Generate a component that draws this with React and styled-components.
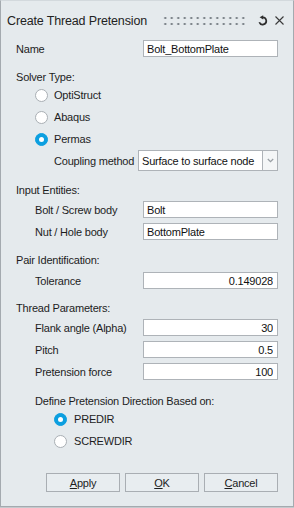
import React from 'react'
import styled, { createGlobalStyle } from 'styled-components'

const GlobalStyle = createGlobalStyle`
  html, body {
    margin: 0;
    padding: 0;
    background: #c4c9cd;
  }
  * {
    box-sizing: border-box;
  }
`

const Window = styled.div`
  width: 294px;
  height: 507px;
  background: #e5eaed;
  border: 1px solid #a4aaaf;
  border-top-color: #d3d9dd;
  display: flex;
  flex-direction: column;
  font-family: "Segoe UI", "Liberation Sans", Arial, sans-serif;
  font-size: 11px;
  letter-spacing: -0.2px;
  color: #1d1d1d;
`

const TitleBar = styled.div`
  height: 39px;
  display: flex;
  align-items: center;
  padding: 0 9px 0 6px;
`

const Title = styled.div`
  font-size: 12.5px;
  letter-spacing: -0.15px;
  color: #222;
  flex: 1;
`

const Grip = styled.div`
  width: 86px;
  height: 12px;
  margin-right: 10px;
  background-image: radial-gradient(circle, #6f767c 0.9px, transparent 1.2px);
  background-size: 6.5px 6px;
  background-position: 0 0;
`

const IconButton = styled.div`
  width: ${({ $w }) => $w}px;
  height: 12px;
  display: flex;
  align-items: center;
  justify-content: center;
  margin-left: ${({ $ml }) => $ml || 0}px;
`

const Body = styled.div`
  display: flex;
  flex-direction: column;
  padding: 0 15px;
`

const Section = styled.div`
  display: flex;
  flex-direction: column;
  margin-top: ${({ $mt }) => $mt || 0}px;
  padding-left: ${({ $indent }) => $indent || 0}px;
`

const SectionLabel = styled.div`
  height: 14px;
  line-height: 14px;
  white-space: nowrap;
`

const FieldList = styled.div`
  display: flex;
  flex-direction: column;
  gap: 5px;
  margin-top: ${({ $mt }) => $mt || 0}px;
`

const FieldRow = styled.div`
  display: grid;
  grid-template-columns: 1fr 135px;
  align-items: center;
  height: 17px;
  padding-left: ${({ $indent }) => $indent || 0}px;
`

const FieldLabel = styled.span`
  white-space: nowrap;
`

const TextInput = styled.input`
  height: 17px;
  width: 100%;
  margin: 0;
  border: 1px solid #aeb3b8;
  background: #fff;
  font: inherit;
  letter-spacing: inherit;
  color: #111;
  text-align: ${({ $align }) => $align || 'left'};
  padding: 0 4px 0 3px;
  outline: none;
`

const RadioRow = styled.div`
  display: flex;
  align-items: center;
  gap: 6px;
  height: 22px;
  padding-left: ${({ $indent }) => $indent || 0}px;
`

const RadioDot = styled.span`
  width: 13px;
  height: 13px;
  border-radius: 50%;
  flex: none;
  background: ${({ $checked }) => ($checked ? '#0c9fe0' : '#fff')};
  border: 1px solid ${({ $checked }) => ($checked ? '#0c9fe0' : '#a9afb4')};
  display: flex;
  align-items: center;
  justify-content: center;
  &::after {
    content: '';
    width: 5px;
    height: 5px;
    border-radius: 50%;
    background: #fff;
    display: ${({ $checked }) => ($checked ? 'block' : 'none')};
  }
`

const RadioText = styled.span`
  margin-left: ${({ $gap }) => $gap || 0}px;
`

const CouplingRow = styled.div`
  display: grid;
  grid-template-columns: 1fr 125px 15px;
  align-items: center;
  height: 21px;
  padding-left: 38px;
`

const Select = styled.div`
  height: 21px;
  background: #fff;
  border: 1px solid #aeb3b8;
  display: flex;
  align-items: center;
  padding-left: 3px;
  white-space: nowrap;
  overflow: hidden;
  color: #111;
`

const SelectArrow = styled.div`
  height: 21px;
  background: #f4f6f7;
  border: 1px solid #aeb3b8;
  border-left: none;
  display: flex;
  align-items: center;
  justify-content: center;
`

const ButtonRow = styled.div`
  display: flex;
  justify-content: flex-end;
  gap: 5px;
  margin-top: 21px;
`

const Button = styled.div`
  width: 74px;
  height: 19px;
  border: 1px solid #a9aeb3;
  background: #e8edf0;
  display: flex;
  align-items: center;
  justify-content: center;
  color: #1d1d1d;
  u {
    text-decoration: underline;
    text-underline-offset: 1px;
  }
`

const RefreshIcon = () => (
  <svg width="10" height="11" viewBox="0 0 10 11">
    <path d="M4.6 2.3 A3.6 3.6 0 1 1 1.3 7.2" fill="none" stroke="#2e2e2e" strokeWidth="1.7" />
    <polygon points="1.6,2.3 5.2,0.2 5.2,4.4" fill="#2e2e2e" />
  </svg>
)

const CloseIcon = () => (
  <svg width="9" height="9" viewBox="0 0 9 9">
    <path d="M0.5 0.5 L8.5 8.5 M8.5 0.5 L0.5 8.5" stroke="#3a3a3a" strokeWidth="1.1" />
  </svg>
)

const Chevron = () => (
  <svg width="7" height="5" viewBox="0 0 7 5">
    <path d="M0.8 1 L3.5 3.7 L6.2 1" fill="none" stroke="#9aa0a5" strokeWidth="1.3" />
  </svg>
)

const Radio = ({ label, checked, indent, gap }) => (
  <RadioRow $indent={indent}>
    <RadioDot $checked={checked} />
    <RadioText $gap={gap}>{label}</RadioText>
  </RadioRow>
)

const Field = ({ label, value, indent, align }) => (
  <FieldRow $indent={indent}>
    <FieldLabel>{label}</FieldLabel>
    <TextInput readOnly value={value} $align={align} />
  </FieldRow>
)

export default function App() {
  return (
    <>
      <GlobalStyle />
      <Window>
        <TitleBar>
          <Title>Create Thread Pretension</Title>
          <Grip />
          <IconButton $w={10}>
            <RefreshIcon />
          </IconButton>
          <IconButton $w={9} $ml={7}>
            <CloseIcon />
          </IconButton>
        </TitleBar>
        <Body>
          <Field label="Name" value="Bolt_BottomPlate" />

          <Section $mt={13}>
            <SectionLabel>Solver Type:</SectionLabel>
            <Radio label="OptiStruct" indent={19} />
            <Radio label="Abaqus" indent={19} />
            <Radio label="Permas" indent={19} checked />
            <CouplingRow>
              <FieldLabel>Coupling method</FieldLabel>
              <Select>Surface to surface node</Select>
              <SelectArrow>
                <Chevron />
              </SelectArrow>
            </CouplingRow>
          </Section>

          <Section $mt={12}>
            <SectionLabel>Input Entities:</SectionLabel>
            <FieldList $mt={4}>
              <Field label="Bolt / Screw body" value="Bolt" indent={19} />
              <Field label="Nut / Hole body" value="BottomPlate" indent={19} />
            </FieldList>
          </Section>

          <Section $mt={13}>
            <SectionLabel>Pair Identification:</SectionLabel>
            <FieldList $mt={5}>
              <Field label="Tolerance" value="0.149028" indent={19} align="right" />
            </FieldList>
          </Section>

          <Section $mt={12}>
            <SectionLabel>Thread Parameters:</SectionLabel>
            <FieldList $mt={4}>
              <Field label="Flank angle (Alpha)" value="30" indent={19} align="right" />
              <Field label="Pitch" value="0.5" indent={19} align="right" />
              <Field label="Pretension force" value="100" indent={19} align="right" />
            </FieldList>
          </Section>

          <Section $mt={14} $indent={19}>
            <SectionLabel>Define Pretension Direction Based on:</SectionLabel>
            <Radio label="PREDIR" indent={19} gap={1} checked />
            <Radio label="SCREWDIR" indent={19} gap={1} />
          </Section>

          <ButtonRow>
            <Button>
              <span><u>A</u>pply</span>
            </Button>
            <Button>
              <span><u>O</u>K</span>
            </Button>
            <Button>
              <span><u>C</u>ancel</span>
            </Button>
          </ButtonRow>
        </Body>
      </Window>
    </>
  )
}
